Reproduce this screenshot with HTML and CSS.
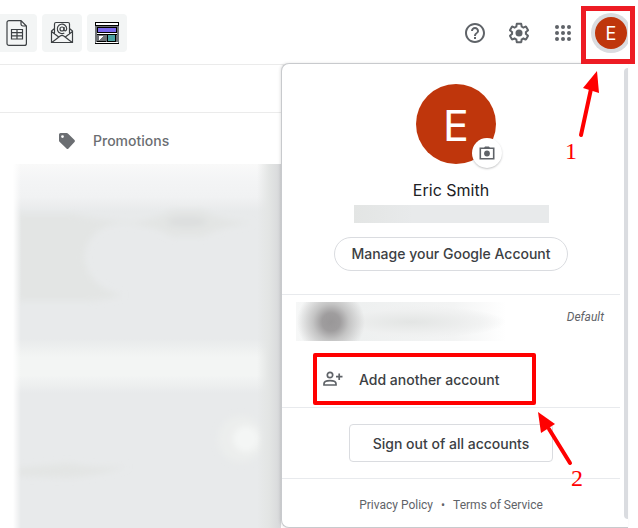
FILE: index.html
```
<!DOCTYPE html>
<html lang="en">
<head>
    <meta charset="UTF-8">
    <meta name="viewport" content="width=device-width, initial-scale=1.0">
    <title>Add another account</title>
    <link rel="stylesheet" href="styles.css">
</head>
<body>
    <header class="header">
        <nav class="shortcuts">
            <button type="button" class="shortcut shortcut-first" aria-label="Spreadsheet">
                <svg width="26" height="28" viewBox="0 0 26 28" fill="none" stroke="#3c4043" stroke-width="1.2">
                    <path d="M5 1.6h12l5.4 5.4v17.4a2 2 0 0 1-2 2H5a2 2 0 0 1-2-2V3.6a2 2 0 0 1 2-2zM17 1.6V5a2 2 0 0 0 2 2h3.4"/>
                    <path d="M7.5 10.5h11V20h-11zM7.500 13.700h11M7.500 16.900h11M13 10.500V20"/>
                </svg>
            </button>
            <button type="button" class="shortcut" aria-label="Email">
                <svg width="24" height="24" viewBox="0 0 24 24" fill="none" stroke="#3c4043" stroke-width="1.2">
                    <path d="M4.500 13V3A1.500 1.500 0 0 1 6 1.500h12A1.500 1.500 0 0 1 19.500 3v10M4.500 7.500L1.500 10v11.500h21V10l-3-2.500M1.500 10.500l7.500 5.800M22.500 10.500L15 16.300M1.800 21.500l8.400-6.500q1.800-1.200 3.600 0l8.400 6.500"/>
                    <circle cx="12" cy="8" r="2"/>
                    <path d="M14 6v2.500c0 2 2.700 1.800 2.700-.7A4.700 4.700 0 1 0 14.300 12"/>
                </svg>
            </button>
            <button type="button" class="shortcut" aria-label="Layout">
                <svg width="24" height="22" viewBox="0 0 24 22" shape-rendering="crispEdges">
                    <path fill="#6f7276" d="M0 0h24v22H0z"/>
                    <path fill="#000" d="M0 0h24v4H0zM2 5h20v6H2zM2 12h20v1H2zM12 12h9v8h-9zM2 19h9v1H2zM0 21h24v1H0z"/>
                    <path fill="#fff" d="M1 1h22v2H1zM2 11h20v1H2zM1 20h22v1H1zM4 14h5l-5 4z"/>
                    <path fill="#7b68ee" d="M3 6h18v4H3z"/>
                    <path fill="#4ba3a3" d="M13 13h7v6h-7z"/>
                </svg>
            </button>
        </nav>
        <div class="header-actions">
            <button type="button" class="icon-button" aria-label="Support">
                <svg width="24" height="24" viewBox="0 0 24 24"><path d="M11 18h2v-2h-2v2zm1-16C6.480 2 2 6.480 2 12s4.480 10 10 10 10-4.480 10-10S17.520 2 12 2zm0 18c-4.410 0-8-3.590-8-8s3.590-8 8-8 8 3.590 8 8-3.590 8-8 8zm0-14c-2.210 0-4 1.790-4 4h2c0-1.100.9-2 2-2s2 .9 2 2c0 2-3 1.750-3 5h2c0-2.250 3-2.500 3-5 0-2.210-1.790-4-4-4z"/></svg>
            </button>
            <button type="button" class="icon-button" aria-label="Settings">
                <svg width="24" height="24" viewBox="0 0 24 24"><path d="M13.850 22.250h-3.700c-.74 0-1.360-.54-1.450-1.270l-.27-1.890c-.27-.14-.53-.29-.79-.46l-1.800.72c-.7.26-1.470-.03-1.810-.65L2.200 15.530c-.35-.66-.2-1.440.36-1.880l1.530-1.190c-.01-.15-.02-.3-.02-.46 0-.15.010-.31.020-.46l-1.520-1.190c-.59-.45-.74-1.260-.37-1.880l1.850-3.190c.34-.62 1.110-.9 1.790-.63l1.810.73c.26-.17.52-.32.78-.46l.27-1.910c.09-.7.71-1.250 1.440-1.250h3.700c.74 0 1.360.54 1.450 1.270l.27 1.890c.27.14.53.29.79.46l1.800-.72c.71-.26 1.480.03 1.820.65l1.840 3.180c.36.66.2 1.440-.36 1.880l-1.520 1.190c.01.15.02.3.02.46s-.01.31-.02.46l1.520 1.190c.56.45.72 1.230.37 1.860l-1.860 3.220c-.34.62-1.110.9-1.800.63l-1.800-.72c-.26.17-.52.32-.78.46l-.27 1.910c-.1.68-.72 1.220-1.460 1.220zm-3.230-2h2.760l.37-2.550.53-.22c.44-.18.88-.44 1.340-.78l.45-.34 2.380.96 1.380-2.400-2.030-1.580.07-.56c.03-.26.06-.51.06-.78s-.03-.53-.06-.78l-.07-.56 2.030-1.580-1.390-2.400-2.390.96-.45-.35c-.42-.32-.87-.58-1.330-.77l-.52-.22-.37-2.550h-2.760l-.37 2.550-.53.21c-.44.19-.88.44-1.340.79l-.45.33-2.380-.95-1.390 2.390 2.030 1.580-.07.56a7 7 0 0 0-.06.79c0 .26.02.53.06.78l.07.56-2.030 1.580 1.380 2.400 2.390-.96.45.35c.43.33.86.58 1.330.77l.53.22.38 2.550z"/><circle cx="12" cy="12" r="3.500"/></svg>
            </button>
            <button type="button" class="icon-button" aria-label="Google apps">
                <svg width="24" height="24" viewBox="0 0 24 24"><circle cx="6" cy="6" r="2"/><circle cx="12" cy="6" r="2"/><circle cx="18" cy="6" r="2"/><circle cx="6" cy="12" r="2"/><circle cx="12" cy="12" r="2"/><circle cx="18" cy="12" r="2"/><circle cx="6" cy="18" r="2"/><circle cx="12" cy="18" r="2"/><circle cx="18" cy="18" r="2"/></svg>
            </button>
            <button type="button" class="profile-button" aria-label="Google Account">
                <span class="profile-ring"><span class="profile-letter">E</span></span>
            </button>
        </div>
    </header>

    <main class="mailbox">
        <div class="toolbar"></div>
        <div class="tabs">
            <a href="#" class="tab">
                <svg width="18" height="18" viewBox="0 0 18 18"><path fill="#6b6e72" fill-rule="evenodd" d="M2.500 1h6.200q.7 0 1.200.5l6.600 6.600q1 1 0 2l-6 6.400q-1 1-2 0L1.500 9.700Q1 9.200 1 8.500v-6Q1 1 2.500 1zM4.500 3.200a1.400 1.400 0 1 0 0 2.800 1.400 1.400 0 1 0 0-2.800z"/></svg>
                Promotions
            </a>
        </div>
        <div class="mail-list">
            <svg class="mail-blur" viewBox="0 0 268 364" preserveAspectRatio="none" aria-hidden="true">
                <defs>
                    <linearGradient id="rows" x1="0" y1="0" x2="0" y2="1">
                        <stop offset="0" stop-color="#f9f9f9"/>
                        <stop offset=".05" stop-color="#f3f4f5"/>
                        <stop offset=".09" stop-color="#f1f2f3"/>
                        <stop offset=".13" stop-color="#e8eaeb"/>
                        <stop offset=".48" stop-color="#e8eaeb"/>
                        <stop offset=".53" stop-color="#f3f5f4"/>
                        <stop offset=".58" stop-color="#f3f5f4"/>
                        <stop offset=".63" stop-color="#e8eaeb"/>
                        <stop offset="1" stop-color="#e8eaeb"/>
                    </linearGradient>
                    <linearGradient id="edgeLeft">
                        <stop offset="0" stop-color="#fff"/>
                        <stop offset="1" stop-color="#fff" stop-opacity="0"/>
                    </linearGradient>
                    <linearGradient id="edgeRight">
                        <stop offset="0" stop-color="#e3e5e4" stop-opacity="0"/>
                        <stop offset=".5" stop-color="#e3e5e4"/>
                        <stop offset="1" stop-color="#d7d8da"/>
                    </linearGradient>
                    <filter id="soft" x="-30%" y="-60%" width="160%" height="220%"><feGaussianBlur stdDeviation="3"/></filter>
                </defs>
                <path fill="url(#rows)" d="M0 0h268v364H0z"/>
                <g filter="url(#soft)">
                    <path fill="#e3e5e4" d="M5 50h55q25 6 60 8 20-2 40-12h30q15 10 50 13-35 4-50 14h-30q-20-12-50-14-35 2-39 35 5 30 39 37-20 6-35 6H5zM5 304l50-5q30 6 60 3-30 10-60 12l-50-2z"/>
                    <ellipse cx="174" cy="58" rx="20" ry="5" fill="#dcdede"/>
                    <circle cx="228" cy="275" r="23" fill="#eceeed"/>
                    <circle cx="233" cy="275" r="13" fill="#f4f6f5"/>
                </g>
                <path fill="url(#edgeLeft)" d="M0 0h8v364H0z"/>
                <path fill="url(#edgeRight)" d="M244 0h24v364h-24z"/>
            </svg>
        </div>
    </main>

    <aside class="account-menu">
        <div class="account-content">
            <section class="account-profile">
                <div class="avatar">
                    E
                    <button type="button" class="camera-button" aria-label="Change photo">
                        <svg width="16" height="16" viewBox="0 0 16 16"><path fill="none" stroke="#5f6368" stroke-width="1.600" d="M1.300 3.300h13.400v10.400H1.300z"/><path fill="#5f6368" d="M5 3l1-1.600h4L11 3z"/><circle cx="8" cy="8.500" r="2.900" fill="#5f6368"/></svg>
                    </button>
                </div>
                <h1>Eric Smith</h1>
                <div class="hidden-email"></div>
                <a href="#" class="manage-link">Manage your Google Account</a>
            </section>
            <section class="account-list">
                <div class="account-row">
                    <div class="hidden-account"></div>
                    <span class="default-label">Default</span>
                </div>
                <button type="button" class="add-account">
                    <svg width="20" height="16" viewBox="0 0 20 16" fill="none" stroke="#5f6368" stroke-width="1.700"><circle cx="7" cy="4" r="2.700"/><path d="M1 14v-1.300c0-4 12-4 12 0V14zM16.200 2.500V9M13 5.700h6.500"/></svg>
                    Add another account
                </button>
            </section>
            <section class="sign-out">
                <button type="button" class="sign-out-button">Sign out of all accounts</button>
            </section>
            <footer class="account-footer">
                <a href="#">Privacy Policy</a>
                <span>•</span>
                <a href="#">Terms of Service</a>
            </footer>
        </div>
        <div class="scrollbar"></div>
    </aside>

    <!-- Step markers -->
    <div class="highlight"></div>
    <div class="step step-one">
        <svg width="24" height="68" viewBox="0 0 24 68"><path fill="none" stroke="#f00" stroke-width="4" stroke-linecap="round" d="M6 64L16 18"/><path fill="#f00" d="M22 0l2 22-16-5z"/></svg>
        <span>1</span>
    </div>
    <div class="step step-two">
        <svg width="36" height="54" viewBox="0 0 36 54"><path fill="none" stroke="#f00" stroke-width="4" stroke-linecap="round" d="M32 51L11 17"/><path fill="#f00" d="M0 0l17 12-14 9z"/></svg>
        <span>2</span>
    </div>
</body>
</html>
```
FILE: styles.css
```
* {
    box-sizing: border-box;
}

body {
    position: relative;
    display: flex;
    flex-direction: column;
    min-height: 100vh;
    margin: 0;
    padding-right: 10px;
    overflow-x: hidden;
    background-color: white;
    font-family: Inter, Roboto, sans-serif;
    font-size: 14px;
    color: #3c4043;
}

button {
    padding: 0;
    border: none;
    background: none;
    font: inherit;
    color: inherit;
    cursor: pointer;
}

a {
    color: inherit;
    text-decoration: none;
}

svg {
    display: block;
    flex: none;
}

/* Header */
.header {
    display: flex;
    justify-content: space-between;
    height: 65px;
    border-bottom: 1px solid #ebebeb;
}

.shortcuts {
    display: flex;
    gap: 5px;
    padding-top: 14px;
}

.shortcut {
    display: flex;
    align-items: center;
    justify-content: center;
    width: 40px;
    height: 38px;
    border-radius: 4px;
    background-color: #f3f5f5;
}

.shortcut-first {
    width: 37px;
    padding-right: 3px;
    border-radius: 0 4px 4px 0;
}

.header-actions {
    display: flex;
    align-items: center;
    gap: 20px;
    height: 66px;
}

.icon-button svg {
    fill: #5f6368;
}

.profile-button {
    width: 37px;
    margin-left: -4px;
    overflow: hidden;
}

.profile-ring {
    display: block;
    width: 40px;
    padding: 4px;
    border-radius: 50%;
    background-color: #dadce0;
}

.profile-letter {
    display: block;
    height: 32px;
    border-radius: 50%;
    background-color: #bf360c;
    color: white;
    font-size: 18px;
    line-height: 34px;
    text-align: center;
}

/* Mailbox */
.mailbox {
    display: flex;
    flex: 1;
    flex-direction: column;
}

.toolbar {
    height: 48px;
    border-bottom: 1px solid #ebebeb;
}

.tabs {
    display: flex;
    align-items: center;
    height: 51px;
    padding: 4px 58px 0;
}

.tab {
    display: flex;
    align-items: center;
    gap: 17px;
    color: #6b6e72;
    font-weight: 500;
}

.mail-list {
    display: flex;
    flex: 1;
    margin: 0 347px 0 13px;
}

.mail-blur {
    width: 100%;
    height: 100%;
    min-height: 364px;
}

/* Account menu */
.account-menu {
    position: absolute;
    top: 63px;
    right: 10px;
    display: flex;
    gap: 4px;
    width: 347px;
    border: 1px solid #c8cacd;
    border-right: none;
    border-radius: 8px 0 0 8px;
    background-color: white;
    box-shadow: -1px 0 3px rgba(0,0,0,0.1);
}

.account-content {
    flex: 1;
}

.scrollbar {
    width: 4px;
    margin: 4px 0 8px;
    border-radius: 4px 0 0 4px;
    background-color: #dadce0;
}

.account-profile {
    display: flex;
    flex-direction: column;
    align-items: center;
    padding: 20px 0 23px;
    border-bottom: 1px solid #e8eaed;
}

.avatar {
    position: relative;
    width: 80px;
    height: 80px;
    margin-left: 10px;
    border-radius: 50%;
    background-color: #bf360c;
    color: white;
    font-size: 43px;
    line-height: 82px;
    text-align: center;
}

.camera-button {
    position: absolute;
    right: -6px;
    bottom: -4px;
    display: flex;
    align-items: center;
    justify-content: center;
    width: 30px;
    height: 30px;
    border-radius: 50%;
    background-color: white;
    box-shadow: 0 1px 2px rgba(60,64,67,0.3);
}

h1 {
    margin: 16px 0 4px;
    color: #202124;
    font-size: 16px;
    font-weight: 400;
    line-height: 21px;
}

.hidden-email {
    width: 195px;
    height: 18px;
    background: linear-gradient(90deg, #e3e5e4, #e8eaeb 30%);
}

.manage-link {
    height: 34px;
    margin-top: 14px;
    padding: 0 16px;
    border: 1px solid #dadce0;
    border-radius: 17px;
    font-weight: 500;
    line-height: 32px;
}

.account-list {
    padding: 7px 16px 2px 14px;
    border-bottom: 1px solid #e8eaed;
}

.account-row {
    display: flex;
    justify-content: space-between;
    height: 39px;
}

.hidden-account {
    width: 210px;
    background:
        radial-gradient(circle at 35px 20px, #999798 0, #9f9d9e 9px, #c4c4c4 18px, rgba(232,234,235,0) 34px),
        radial-gradient(ellipse at 115px 20px, #e3e5e4 0, rgba(239,240,240,0.8) 70px, rgba(255,255,255,0) 95px),
        linear-gradient(90deg, #f6f7f7, #eef0f0 30%, #f3f4f4 75%, #fff);
}

.default-label {
    padding-top: 7px;
    color: #5f6368;
    font-family: Roboto, sans-serif;
    font-size: 12px;
    font-style: italic;
    line-height: 16px;
}

.add-account {
    display: flex;
    align-items: center;
    gap: 16px;
    width: 223px;
    height: 52px;
    margin: 12px 0 0 17px;
    padding: 0 6px;
    border: 4px solid #f00;
    border-radius: 2px;
    font-weight: 500;
}

.sign-out {
    display: flex;
    justify-content: center;
    padding: 16px 0;
    border-bottom: 1px solid #e8eaed;
}

.sign-out-button {
    height: 38px;
    padding: 0 23px;
    border: 1px solid #dadce0;
    border-radius: 4px;
    font-weight: 500;
}

.account-footer {
    display: flex;
    justify-content: center;
    gap: 8px;
    padding: 18px 0 14px;
    color: #5f6368;
    font-family: Roboto, sans-serif;
    font-size: 12px;
    line-height: 16px;
}

/* Step markers */
.highlight {
    position: absolute;
    top: 6px;
    right: 3px;
    width: 54px;
    height: 58px;
    border: 5px solid #ed1c24;
}

.step {
    position: absolute;
    color: #f00;
    font-family: "Liberation Serif", serif;
    font-size: 24px;
    line-height: 24px;
}

.step-one {
    top: 71px;
    right: 37px;
    width: 36px;
}

.step-one svg {
    margin-left: 10px;
}

.step-two {
    top: 412px;
    right: 55px;
    width: 45px;
}

.step-two span {
    display: block;
    text-align: right;
}
```
